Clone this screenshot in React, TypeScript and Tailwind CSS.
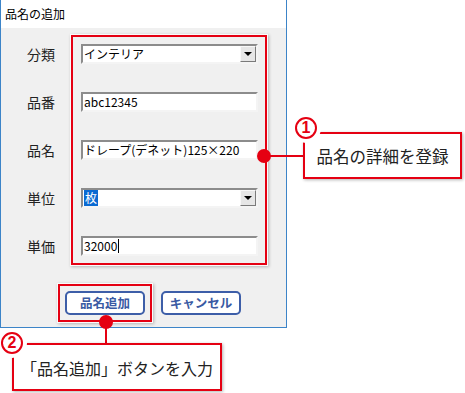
import React from 'react';

const RED = '#e50012';

const Field: React.FC<{ children?: React.ReactNode; combo?: boolean }> = ({ children, combo }) => (
  <div className="flex h-[20px] w-[177px] items-stretch border-2 border-t-[#8c8c8c] border-l-[#8c8c8c] border-b-[#f4f4f4] border-r-[#f4f4f4] bg-white">
    <div className="flex flex-1 items-center whitespace-nowrap pl-[1px] text-[12px] leading-[16px] text-black">
      {children}
    </div>
    {combo && (
      <div className="flex w-[16px] items-center justify-center border border-t-[#f8f8f8] border-l-[#f8f8f8] border-b-[#7a7a7a] border-r-[#7a7a7a] bg-[#e6e6e6]">
        <span className="block h-0 w-0 border-x-[4px] border-t-[4px] border-x-transparent border-t-black" />
      </div>
    )}
  </div>
);

const Circled: React.FC<{ n: string; className: string }> = ({ n, className }) => (
  <div
    className={`absolute flex h-[22px] w-[22px] items-center justify-center rounded-full border-2 bg-white text-[16px] font-bold leading-[18px] shadow-[0_0_0_4px_#fff] ${className}`}
    style={{ borderColor: RED, color: RED, fontFamily: '"Liberation Sans", sans-serif' }}
  >
    {n}
  </div>
);

const Dot: React.FC<{ className: string }> = ({ className }) => (
  <div className={`absolute h-[14px] w-[14px] rounded-full bg-[#e50012] ${className}`} />
);

export default function App() {
  const labels = ['分類', '品番', '品名', '単位', '単価'];
  return (
    <div
      className="relative h-[393px] w-[465px] overflow-hidden bg-white text-[#222]"
      style={{ fontFamily: '"Noto Sans CJK JP", "Noto Sans", sans-serif' }}
    >
      {/* dialog */}
      <div className="flex h-[328px] w-[287px] flex-col border-x border-b border-[#3c84c8] bg-[#f0f0f0]">
        <div className="flex h-[28px] items-center bg-white pl-[4px] text-[12px] text-black">品名の追加</div>
        <div className="flex flex-col pl-[26px] pt-[7px]">
          <div className="flex items-start">
            <div className="flex w-[44px] flex-col gap-[28px] pt-[9px]">
              {labels.map((l) => (
                <div key={l} className="h-[20px] text-[14px] leading-[20px] text-[#222]">
                  {l}
                </div>
              ))}
            </div>
            <div className="flex h-[230px] w-[196px] flex-col gap-[28px] border-2 border-[#e50012] pl-[8px] pt-[7px] shadow-[0_0_0_1px_#fafafa,1px_1px_3px_1px_rgba(0,0,0,0.25)]">
              <Field combo>インテリア</Field>
              <Field>abc12345</Field>
              <Field>ドレープ(デネット)125×220</Field>
              <Field combo>
                <span className="bg-[#0a6ad2] px-[1px] text-white">枚</span>
              </Field>
              <Field>
                32000<span className="ml-[1px] inline-block h-[14px] w-[1px] bg-black" />
              </Field>
            </div>
          </div>
          <div className="mt-[19px] flex items-center pl-[31px]">
            <div className="flex h-[38px] w-[94px] items-center justify-center border-2 border-[#e50012] shadow-[0_0_0_1px_#fafafa,1px_1px_3px_1px_rgba(0,0,0,0.25)]">
              <button className="flex h-[24px] w-[80px] items-center justify-center rounded-[5px] border-2 border-[#3d5ea8] bg-white text-[12.5px] font-bold text-[#3a5aa3]">
                品名追加
              </button>
            </div>
            <button className="ml-[9px] flex h-[24px] w-[80px] items-center justify-center rounded-[5px] border-2 border-[#3d5ea8] bg-white text-[12.5px] font-bold text-[#3a5aa3]">
              キャンセル
            </button>
          </div>
        </div>
      </div>

      {/* callout 1 */}
      <div className="absolute left-[264px] top-[155px] h-[2px] w-[40px] bg-[#e50012]" />
      <Dot className="left-[257px] top-[149px]" />
      <div className="absolute left-[303px] top-[132px] flex h-[47px] w-[159px] items-center justify-center border-2 border-[#e50012] bg-white pt-[2px] text-[16.5px] text-[#222] shadow-[1px_1px_3px_rgba(0,0,0,0.3)]">
        品名の詳細を登録
      </div>
      <Circled n="1" className="left-[295px] top-[117px]" />

      {/* callout 2 */}
      <div className="absolute left-[105px] top-[322px] h-[22px] w-[2px] bg-[#e50012]" />
      <Dot className="left-[99px] top-[315px]" />
      <div className="absolute left-[12px] top-[343px] flex h-[48px] w-[210px] items-center justify-center border-2 border-[#e50012] bg-white pt-[2px] text-[16px] text-[#222] shadow-[1px_1px_3px_rgba(0,0,0,0.3)]">
        「品名追加」ボタンを入力
      </div>
      <Circled n="2" className="left-[1px] top-[332px]" />
    </div>
  );
}
